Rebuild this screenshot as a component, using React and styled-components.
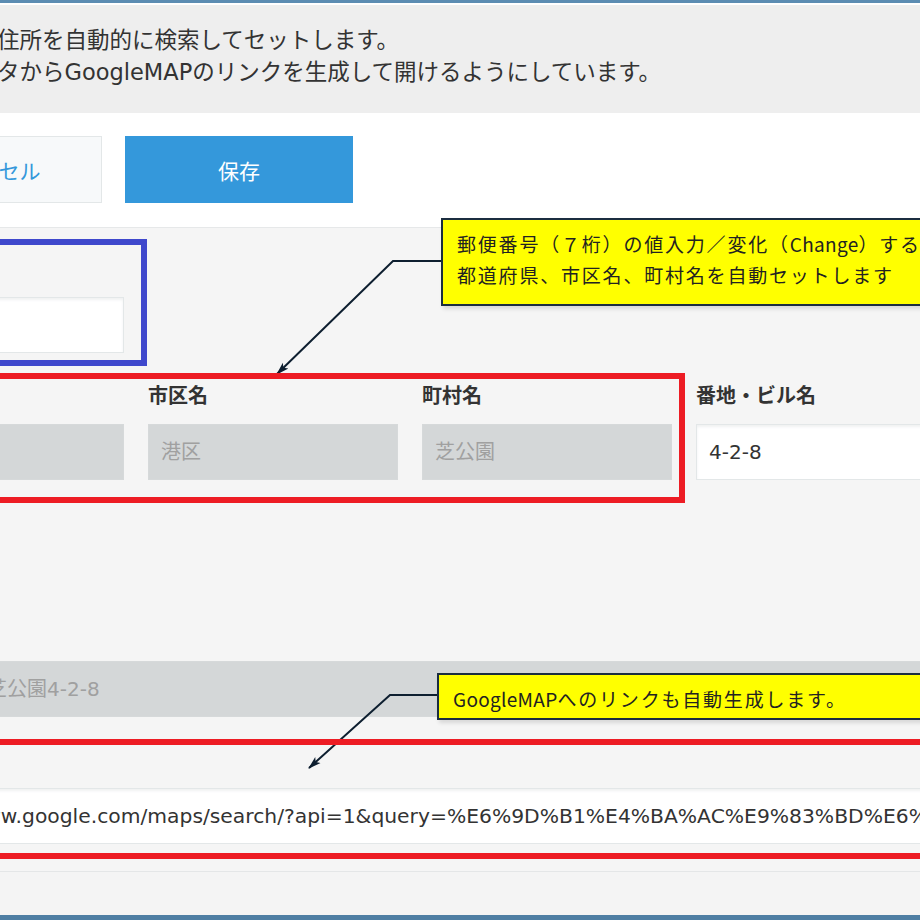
import React from 'react'
import styled, {createGlobalStyle} from 'styled-components'

const FONT = `"DejaVu Sans", "Noto Sans CJK JP", sans-serif`;

const GlobalStyle = createGlobalStyle`
  html, body {
    margin: 0;
    padding: 0;
    background: #f4f4f4;
  }
  body {
    font-family: ${FONT};
    color: #333;
  }
`;

const addressFields = [
  {label: '都道府県', value: '東京都'},
  {label: '市区名', value: '港区'},
  {label: '町村名', value: '芝公園'},
];

const mapUrl = 'https://www.google.com/maps/search/?api=1&query=%E6%9D%B1%E4%BA%AC%E9%83%BD%E6%B8%AF%E5%8C%BA%E8%8A%9D%E5%85%AC%E5%9C%924-2-8';

function App() {
  return (
    <>
      <GlobalStyle/>
      <Screen>
        <Page>
          <Notice>
            <NoticeLine>住所を自動的に検索してセットします。</NoticeLine>
            <NoticeLine>タからGoogleMAPのリンクを生成して開けるようにしています。</NoticeLine>
          </Notice>

          <Toolbar>
            <ActionButton>キャンセル</ActionButton>
            <ActionButton $primary>保存</ActionButton>
          </Toolbar>

          <Form>
            <FieldRow>
              <Field>
                <Label>郵便番号</Label>
                <Input defaultValue="" />
              </Field>
            </FieldRow>

            <FieldRow>
              {addressFields.map(f => (
                <Field key={f.label}>
                  <Label>{f.label}</Label>
                  <ReadOnly>{f.value}</ReadOnly>
                </Field>
              ))}
              <Field>
                <Label>番地・ビル名</Label>
                <Input defaultValue="4-2-8" />
              </Field>
            </FieldRow>

            <Spacer/>

            <FieldRow>
              <Field $wide>
                <Label>住所</Label>
                <ReadOnly>東京都港区芝公園4-2-8</ReadOnly>
              </Field>
            </FieldRow>

            <FieldRow>
              <Field $wide>
                <Label>地図リンク</Label>
                <Input $url defaultValue={mapUrl} />
              </Field>
            </FieldRow>
          </Form>
        </Page>

        <Annotations>
          <Arrows viewBox="0 0 920 920" width="920" height="920">
            <defs>
              <marker id="head" markerWidth="13" markerHeight="10" refX="12" refY="5"
                orient="auto" markerUnits="userSpaceOnUse">
                <path d="M0,1 L13,5 L0,9 L3,5 Z" fill="#0e1f30"/>
              </marker>
            </defs>
            <polyline points="441,258 393,258 277,371" fill="none" stroke="#0e1f30"
              strokeWidth="2" markerEnd="url(#head)"/>
            <polyline points="437,692 390,692 309,765" fill="none" stroke="#0e1f30"
              strokeWidth="2" markerEnd="url(#head)"/>
          </Arrows>

          <Frame $color="#3f48cc" style={{left: -10, top: 236, width: 157, height: 127}}/>
          <Frame $color="#ed1c24" style={{left: -10, top: 370, width: 695, height: 130}}/>
          <Frame $color="#ed1c24" style={{left: -10, top: 736, width: 940, height: 120}}/>

          <Callout style={{left: 441, top: 215, height: 88}}>
            郵便番号（７桁）の値入力／変化（<Latin>Change</Latin>）すると<br/>
            都道府県、市区名、町村名を自動セットします
          </Callout>
          <Callout style={{left: 437, top: 670, height: 47}}>
            <Latin>GoogleMAP</Latin>へのリンクも自動生成します。
          </Callout>
        </Annotations>
      </Screen>
    </>
  )
}

const Screen = styled.div`
  position: relative;
  width: 920px;
  height: 920px;
  box-sizing: border-box;
  overflow: hidden;
  border-top: 3px solid #5b8cb2;
  border-bottom: 5px solid #4f7ea3;
  background: #f4f4f4;
`;

// the form is scrolled sideways, so its first column sits off the left edge
const Page = styled.div`
  margin-left: -126px;
  width: 1200px;
`;

const Notice = styled.div`
  border-top: 2px solid #fff;
  background: #eeeeee;
  padding: 19px 0 25px 123px;
  font-size: 22.5px;
  line-height: 32px;
  color: #333;
`;

const NoticeLine = styled.div`
  white-space: nowrap;
`;

const Toolbar = styled.div`
  display: flex;
  gap: 23px;
  background: #fff;
  padding: 23px 0 24px;
  border-bottom: 1px solid #e6e8e9;
`;

const ActionButton = styled.button`
  width: 228px;
  height: 67px;
  box-sizing: border-box;
  font-family: ${FONT};
  font-size: 21px;
  border: 1px solid ${p => p.$primary ? '#3498db' : '#e3e7e8'};
  background: ${p => p.$primary ? '#3498db' : '#f7f9fa'};
  color: ${p => p.$primary ? '#fff' : '#3498db'};
  cursor: pointer;
`;

const Form = styled.div`
  display: flex;
  flex-direction: column;
  gap: 29px;
  background: #f5f5f5;
  padding: 27px 0 27px;
  border-bottom: 1px solid #e4e6e7;
`;

const FieldRow = styled.div`
  display: flex;
  gap: 24px;
`;

const Spacer = styled.div`
  height: 81px;
`;

const Field = styled.div`
  display: flex;
  flex-direction: column;
  gap: 14px;
  width: ${p => p.$wide ? '1200px' : '250px'};
`;

const Label = styled.div`
  font-size: 20px;
  line-height: 28px;
  font-weight: bold;
  color: #333;
  white-space: nowrap;
`;

const Input = styled.input`
  height: 56px;
  box-sizing: border-box;
  border: 1px solid #e3e7e8;
  box-shadow: inset 0 2px 3px #f0f1f2;
  background: #fff;
  padding: 0 12px 0 ${p => p.$url ? '20px' : '12px'};
  font-family: ${FONT};
  font-size: ${p => p.$url ? '20.3px' : '20px'};
  color: #333;
  outline: none;
`;

const ReadOnly = styled.div`
  height: 56px;
  box-sizing: border-box;
  border: 1px solid #d6d9da;
  background: #d4d7d8;
  padding: 0 12px;
  font-size: 20px;
  line-height: 54px;
  color: #a0a0a0;
  white-space: nowrap;
`;

const Annotations = styled.div`
  position: absolute;
  inset: 0;
  pointer-events: none;
`;

const Arrows = styled.svg`
  position: absolute;
  left: 0;
  top: 0;
`;

const Frame = styled.div`
  position: absolute;
  box-sizing: border-box;
  border: 6px solid ${p => p.$color};
`;

const Callout = styled.div`
  position: absolute;
  width: 520px;
  box-sizing: border-box;
  background: #ffff00;
  border: 2px solid #1b2d40;
  box-shadow: 2px 3px 4px rgba(0, 0, 0, 0.12);
  padding: 8px 0 0 14px;
  font-family: "Noto Sans CJK JP", sans-serif;
  font-size: 19px;
  letter-spacing: 1.8px;
  line-height: 31px;
  color: #222;
  white-space: nowrap;
`;

const Latin = styled.span`
  letter-spacing: 0.3px;
`;

export default App
